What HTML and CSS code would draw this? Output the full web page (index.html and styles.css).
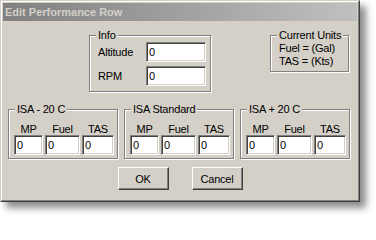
FILE: index.html
```html
<!DOCTYPE html>
<html>
<head>
<meta charset="utf-8">
<link rel="stylesheet" href="styles.css">
</head>
<body>
<div class="window">
  <div class="frame">
    <div class="titlebar">Edit Performance Row</div>
    <div class="content">
      <div class="top-row">
        <fieldset class="group info">
          <legend>Info</legend>
          <div class="info-grid">
            <label class="info-label">Altitude</label><input class="field" type="text" value="0">
            <label class="info-label">RPM</label><input class="field" type="text" value="0">
          </div>
        </fieldset>
        <fieldset class="group units">
          <legend>Current Units</legend>
          <div class="units-text">
            <div>Fuel = (Gal)</div>
            <div>TAS = (Kts)</div>
          </div>
        </fieldset>
      </div>
      <div class="isa-row">
        <fieldset class="group isa">
          <legend>ISA - 20 C</legend>
          <div class="isa-grid">
            <span class="col-label">MP</span><span class="col-label">Fuel</span><span class="col-label">TAS</span>
            <input class="field" type="text" value="0"><input class="field" type="text" value="0"><input class="field" type="text" value="0">
          </div>
        </fieldset>
        <fieldset class="group isa">
          <legend>ISA Standard</legend>
          <div class="isa-grid">
            <span class="col-label">MP</span><span class="col-label">Fuel</span><span class="col-label">TAS</span>
            <input class="field" type="text" value="0"><input class="field" type="text" value="0"><input class="field" type="text" value="0">
          </div>
        </fieldset>
        <fieldset class="group isa">
          <legend>ISA + 20 C</legend>
          <div class="isa-grid">
            <span class="col-label">MP</span><span class="col-label">Fuel</span><span class="col-label">TAS</span>
            <input class="field" type="text" value="0"><input class="field" type="text" value="0"><input class="field" type="text" value="0">
          </div>
        </fieldset>
      </div>
      <div class="buttons">
        <button class="btn" type="button">OK</button>
        <button class="btn" type="button">Cancel</button>
      </div>
    </div>
  </div>
</div>
</body>
</html>
```
FILE: styles.css
```css
html, body {
  margin: 0;
  padding: 0;
}
body {
  width: 376px;
  height: 217px;
  overflow: hidden;
  background: #fff;
  font-family: "Liberation Sans", Arial, sans-serif;
  font-size: 11px;
  color: #000;
}
.window {
  width: 360px;
  height: 202px;
  box-sizing: border-box;
  border: 1px solid;
  border-color: #d4d0c8 #404040 #404040 #d4d0c8;
  background: #d4d0c8;
  box-shadow: 6px 6px 7px rgba(0, 0, 0, 0.45);
}
.frame {
  height: 100%;
  box-sizing: border-box;
  border: 1px solid;
  border-color: #fff #808080 #808080 #fff;
  padding: 1px;
}
.titlebar {
  height: 18px;
  line-height: 18px;
  padding-left: 2px;
  font-weight: bold;
  color: #d4d0c8;
  background: linear-gradient(to right, #808080, #c0c0c0);
  white-space: nowrap;
}
.content {
  padding-top: 8px;
  letter-spacing: -0.2px;
}
.top-row {
  display: flex;
  align-items: flex-start;
  padding-left: 86px;
  gap: 59px;
}
.group {
  margin: 0;
  padding: 0;
  min-width: 0;
  box-sizing: border-box;
  border: 1px solid #808080;
  box-shadow: inset 1px 1px 0 #fff, 1px 1px 0 #fff;
}
.group legend {
  margin-left: 6px;
  padding: 0 2px;
  line-height: 13px;
  background: #d4d0c8;
}
.info {
  width: 122px;
}
.info-grid {
  display: grid;
  grid-template-columns: 48px 60px;
  row-gap: 4px;
  padding: 0 4px 5px 8px;
}
.info-label {
  line-height: 20px;
}
.units {
  width: 79px;
}
.units-text {
  padding: 0 4px 3px 8px;
  line-height: 13px;
  white-space: nowrap;
}
.isa-row {
  display: flex;
  gap: 6px;
  padding-left: 5px;
  margin-top: 11px;
}
.isa {
  width: 110px;
}
.isa-grid {
  display: grid;
  grid-template-columns: 29px 35px 32px;
  column-gap: 2px;
  padding: 7px 3px 3px 5px;
}
.col-label {
  line-height: 12px;
  height: 12px;
  text-align: center;
}
.field {
  display: block;
  width: 100%;
  height: 20px;
  box-sizing: border-box;
  margin: 0;
  padding: 0 0 0 2px;
  border: 1px solid;
  border-color: #808080 #fff #fff #808080;
  box-shadow: inset 1px 1px 0 #404040, inset -1px -1px 0 #d4d0c8;
  background: #fff;
  font: inherit;
  letter-spacing: inherit;
  color: #000;
  outline: none;
}
.buttons {
  display: flex;
  justify-content: center;
  gap: 23px;
  margin-top: 8px;
}
.btn {
  width: 51px;
  height: 23px;
  margin: 0;
  padding: 0;
  box-sizing: border-box;
  border: 1px solid;
  border-color: #fff #404040 #404040 #fff;
  box-shadow: inset -1px -1px 0 #808080;
  background: #d4d0c8;
  font: inherit;
  letter-spacing: inherit;
  color: #000;
}
```
